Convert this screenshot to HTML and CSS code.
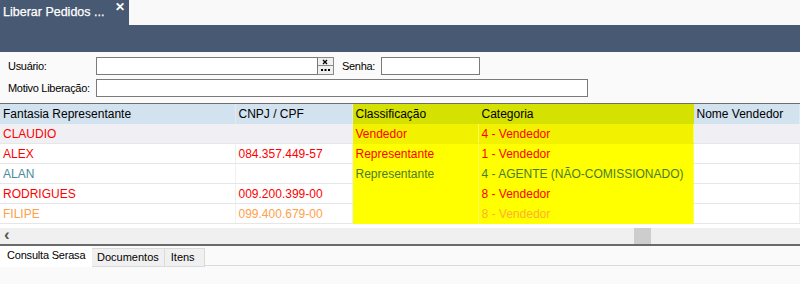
FILE: index.html
```html
<!DOCTYPE html>
<html>
<head>
    <meta charset="utf-8">
    <link rel="stylesheet" href="styles.css">
</head>
<body>

<div class="topbar">
    <div class="doc_tab">
        <span class="doc_title">Liberar Pedidos ...</span>
        <span class="doc_close">&#x2715;</span>
    </div>
</div>
<div class="toolbar"></div>

<div class="form">
    <div class="form_row">
        <label class="lbl">Usuário:</label>
        <div class="inp inp_user"></div>
        <div class="lookup">
            <div class="lookup_btn">
                <svg width="15" height="8" viewBox="0 0 15 8"><path d="M5 2l4 4M9 2l-4 4" stroke="#000" stroke-width="1.3"/></svg>
            </div>
            <div class="lookup_btn dots">
                <svg width="15" height="8" viewBox="0 0 15 8"><rect x="3" y="4" width="2" height="2"/><rect x="6.5" y="4" width="2" height="2"/><rect x="10" y="4" width="2" height="2"/></svg>
            </div>
        </div>
        <label class="lbl lbl_senha">Senha:</label>
        <div class="inp inp_senha"></div>
    </div>
    <div class="form_row">
        <label class="lbl">Motivo Liberação:</label>
        <div class="inp inp_motivo"></div>
    </div>
</div>

<div class="grid">
    <table>
        <colgroup>
            <col class="c1">
            <col class="c2">
            <col class="c3">
            <col class="c4">
            <col>
        </colgroup>
        <tr class="head">
            <th>Fantasia Representante</th>
            <th>CNPJ / CPF</th>
            <th class="hl">Classificação</th>
            <th class="hl">Categoria</th>
            <th>Nome Vendedor</th>
        </tr>
        <tr class="sel red">
            <td>CLAUDIO</td>
            <td></td>
            <td class="hl">Vendedor</td>
            <td class="hl">4 - Vendedor</td>
            <td></td>
        </tr>
        <tr class="red">
            <td>ALEX</td>
            <td>084.357.449-57</td>
            <td class="hl">Representante</td>
            <td class="hl">1 - Vendedor</td>
            <td></td>
        </tr>
        <tr class="green">
            <td class="teal">ALAN</td>
            <td></td>
            <td class="hl">Representante</td>
            <td class="hl">4 - AGENTE (NÃO-COMISSIONADO)</td>
            <td></td>
        </tr>
        <tr class="red">
            <td>RODRIGUES</td>
            <td>009.200.399-00</td>
            <td class="hl"></td>
            <td class="hl">8 - Vendedor</td>
            <td></td>
        </tr>
        <tr class="orange">
            <td>FILIPE</td>
            <td>099.400.679-00</td>
            <td class="hl"></td>
            <td class="hl">8 - Vendedor</td>
            <td></td>
        </tr>
    </table>
    <div class="gap"></div>
    <div class="hscroll">
        <span class="arrow">&#x2039;</span>
        <div class="thumb"></div>
    </div>
</div>

<div class="tabs">
    <div class="tab active">Consulta Serasa</div>
    <div class="tab">Documentos</div>
    <div class="tab tab_itens">Itens</div>
    <div class="tab_rest"></div>
</div>

</body>
</html>
```

FILE: styles.css
```css
body {
    margin: 0;
    background: #fafafa;
    font-family: "Liberation Sans", Arial, sans-serif;
    font-size: 12px;
    overflow: hidden;
}
.topbar {
    height: 25px;
    background: #f9f9f9;
    display: flex;
}
.doc_tab {
    width: 129px;
    background: #485a73;
    color: #fff;
    position: relative;
}
.doc_title {
    display: block;
    padding: 5px 0 0 3px;
    font-size: 12.5px;
    -webkit-text-stroke: 0.25px #fff;
}
.doc_close {
    position: absolute;
    left: 115px;
    top: 0;
    font-size: 12px;
    font-weight: bold;
}
.toolbar {
    height: 27px;
    background: #485a73;
}
.form {
    height: 52px;
    padding-top: 5px;
    box-sizing: border-box;
    border-bottom: 1px solid #6e6e6e;
    font-size: 11px;
    color: #000;
}
.form_row {
    display: flex;
    align-items: center;
    height: 18px;
    margin-bottom: 4px;
}
.lbl {
    width: 88px;
    padding-left: 8px;
    letter-spacing: -0.3px;
    white-space: nowrap;
}
.lbl_senha {
    width: auto;
    padding-left: 8px;
    margin-right: 6px;
}
.inp {
    height: 18px;
    box-sizing: border-box;
    background: #fff;
    border: 1px solid #7a7a7a;
}
.inp_user { width: 222px; }
.inp_senha { width: 99px; }
.inp_motivo { width: 492px; }
.lookup {
    width: 16px;
    height: 18px;
    display: flex;
    flex-direction: column;
}
.lookup_btn {
    height: 9px;
    box-sizing: border-box;
    border: 1px solid #8a8a8a;
    border-left: none;
    background: #f0f0f0;
    overflow: hidden;
}
.lookup_btn svg {
    display: block;
}
.lookup_btn.dots {
    border-top: none;
}
.lookup_btn.dots svg {
    margin-top: -1px;
}
.grid {
    background: #fff;
}
table {
    border-collapse: collapse;
    table-layout: fixed;
    width: 800px;
}
col.c1 { width: 235px; }
col.c2 { width: 117px; }
col.c3 { width: 126px; }
col.c4 { width: 215px; }
th, td {
    height: 19px;
    padding: 0 0 0 3px;
    text-align: left;
    font-weight: normal;
    white-space: nowrap;
    overflow: hidden;
    border-right: 1px solid #f0f0f0;
    border-bottom: 1px solid #e6e6e6;
}
th {
    height: 20px;
    background: #d3e2ef;
    color: #000;
    border-bottom: none;
    border-right: 1px solid #e2ebf3;
}
th.hl {
    background: #d5e100;
    border-right-color: #d5e100;
}
td.hl {
    background: #ffff00;
    border-right-color: #fbfb5a;
    border-bottom-color: #ffff00;
}
tr.sel td { background: #f0f0f4; }
tr.sel td.hl { background: #f2f200; border-bottom-color: #f2f200; }
.red td { color: #ff0000; }
.green td { color: #4a7d2a; }
.green td.teal { color: #4a8a99; }
.orange td { color: #ffa04a; }
.orange td.hl { color: #ffb030; }
.gap {
    height: 4px;
    background: #fff;
}
.hscroll {
    height: 16px;
    background: #f0f0f0;
    position: relative;
}
.arrow {
    position: absolute;
    left: 4px;
    top: -3px;
    font-size: 17px;
    font-weight: bold;
    color: #555;
}
.thumb {
    position: absolute;
    left: 634px;
    top: 0;
    width: 17px;
    height: 16px;
    background: #cdcdcd;
}
.tabs {
    display: flex;
    border-top: 2px solid #6a6a6a;
    font-size: 11px;
    height: 22px;
    white-space: nowrap;
}
.tab {
    margin-top: 2px;
    padding: 2px 5px 0 5px;
    box-sizing: border-box;
    height: 19px;
    background: #f0f0f0;
    border: 1px solid #dadada;
    border-left: none;
    color: #000;
}
.tab_itens {
    width: 40px;
    padding-left: 6px;
}
.tab.active {
    margin-top: 0;
    height: 21px;
    padding: 3px 0 0 7px;
    background: #fff;
    border: none;
    width: 92px;
    letter-spacing: -0.2px;
}
.tab_rest {
    flex: 1;
    border-bottom: 1px solid #dadada;
    height: 19px;
}
```
